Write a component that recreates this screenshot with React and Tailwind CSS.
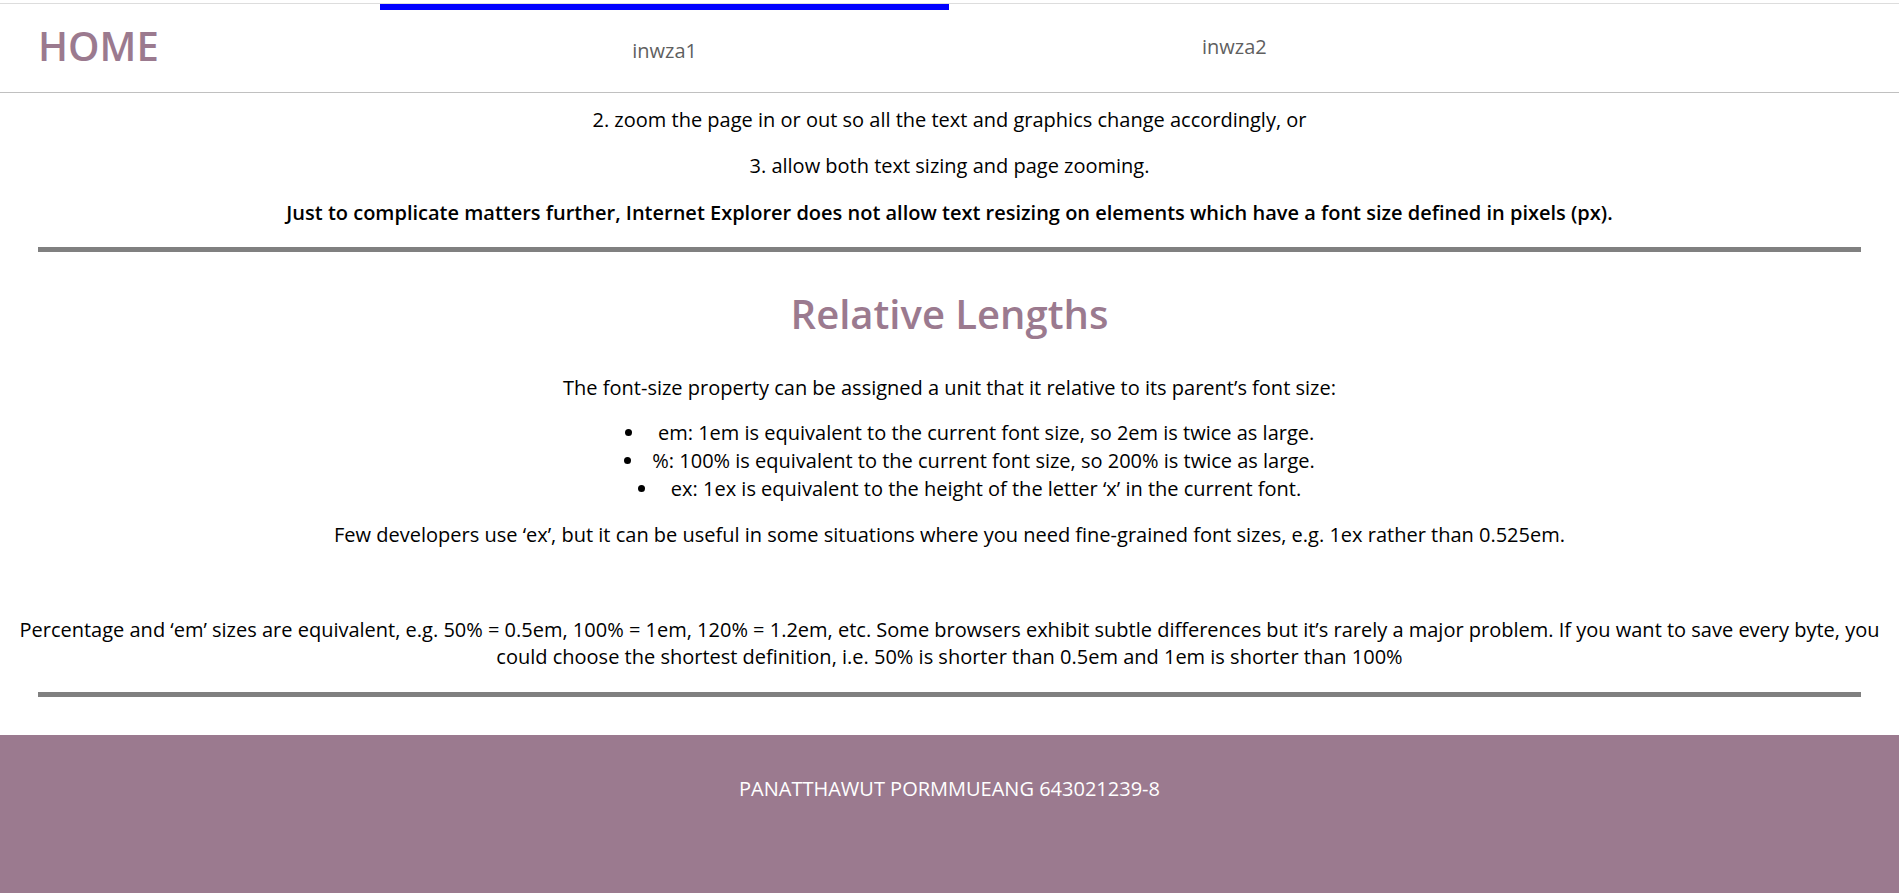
import React from 'react'

const UNITS = [
    { label: 'em', text: ' 1em is equivalent to the current font size, so 2em is twice as large.', lead: '\u00a0' },
    { label: '%', text: ' 100% is equivalent to the current font size, so 200% is twice as large.', lead: '' },
    { label: 'ex', text: ' 1ex is equivalent to the height of the letter ‘x’ in the current font.', lead: '\u2005' },
];

function Header() {
    return (
        <div className="mt-[3px] border-t border-[#dddddd] border-b border-b-[#c0c0c0]">
            <div className="grid grid-cols-10 h-[88px]">
                <div className="col-span-2 flex items-center pl-[38px]">
                    <h1 className="text-[40px] leading-[54px] font-semibold text-[#9b7a8f] -mt-[4px]">HOME</h1>
                </div>
                <div className="col-span-3 border-t-[6px] border-[#0000ff] flex justify-center items-center">
                    <span className="text-[20px] leading-[27px] text-[#5f5f5f] -mt-[2px]">inwza1</span>
                </div>
                <div className="col-span-3 flex justify-center items-center">
                    <span className="text-[20px] leading-[27px] text-[#5f5f5f] -mt-[4px]">inwza2</span>
                </div>
            </div>
        </div>
    )
}

function App() {
    return (
        <div className="min-h-screen bg-white text-black text-center text-[20px] leading-[27px]" style={{ fontFamily: '"Open Sans", "Liberation Sans", sans-serif' }}>
            <Header />

            <div className="pt-[13px]">
                <p>2. zoom the page in or out so all the text and graphics change accordingly, or</p>
                <p className="mt-[19px]">3. allow both text sizing and page zooming.</p>
                <p className="mt-[20px] font-semibold">Just to complicate matters further, Internet Explorer does not allow text resizing on elements which have a font size defined in pixels (px).</p>
                <hr className="mx-[38px] mt-[21px] h-[5px] border-0 bg-[#808080]" />

                {/* Relative lengths */}
                <h2 className="mt-[35px] text-[40px] leading-[54px] font-semibold text-[#9b7a8f]">Relative Lengths</h2>
                <p className="mt-[33px]">The font-size property can be assigned a unit that it relative to its parent’s font size:</p>
                <ul className="mt-[18px] pl-[40px] list-disc list-inside">
                    {UNITS.map((u) => (
                        <li key={u.label} className="leading-[28px]">
                            {u.lead}{u.label}:{u.text}
                        </li>
                    ))}
                </ul>
                <p className="mt-[18px]">Few developers use ‘ex’, but it can be useful in some situations where you need fine-grained font sizes, e.g. 1ex rather than 0.525em.</p>
                <p className="mt-[69px] leading-[26.5px]">Percentage and ‘em’ sizes are equivalent, e.g. 50% = 0.5em, 100% = 1em, 120% = 1.2em, etc. Some browsers exhibit subtle differences but it’s rarely a major problem. If you want to save every byte, you could choose the shortest definition, i.e. 50% is shorter than 0.5em and 1em is shorter than 100%</p>
                <hr className="mx-[38px] mt-[22px] h-[5px] border-0 bg-[#808080]" />
            </div>

            {/* Footer */}
            <div className="mt-[38px] bg-[#9b7a8f] h-[180px] pt-[40px]">
                <p className="text-white">PANATTHAWUT PORMMUEANG 643021239-8</p>
            </div>
        </div>
    )
}

export default App
